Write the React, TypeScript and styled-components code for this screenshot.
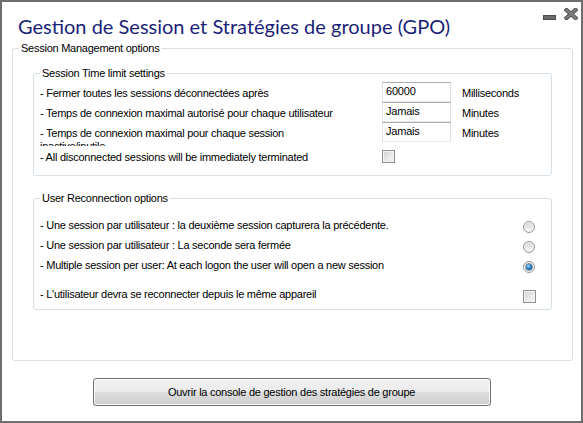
import React from 'react';
import styled, { createGlobalStyle } from 'styled-components';

const GlobalStyle = createGlobalStyle`
    html, body {
        margin: 0;
        padding: 0;
        background: #fff;
    }
    body {
        font-family: "Liberation Sans", Arial, sans-serif;
        font-size: 11px;
        color: #000;
    }
    * {
        box-sizing: border-box;
    }
`;

const Window = styled.div`
    width: 583px;
    height: 423px;
    border: 2px solid #6e6e6e;
    background: #fff;
    display: flex;
    flex-direction: column;
`;

const TitleBar = styled.div`
    height: 39px;
    display: flex;
    align-items: flex-start;
    justify-content: space-between;
    padding: 13px 3px 0 16px;
`;

const Title = styled.h1`
    margin: 0;
    font-family: Lato, "Open Sans", sans-serif;
    font-weight: 400;
    font-size: 20px;
    line-height: 23px;
    color: #1a1f78;
`;

const Controls = styled.div`
    display: flex;
    align-items: flex-start;
    gap: 7px;
    margin-top: -7px;
`;

const Group = styled.fieldset<{ $pad: string; $margin?: string }>`
    margin: ${p => p.$margin || '0'};
    padding: ${p => p.$pad};
    border: 1px solid #d5dfe5;
    border-radius: 3px;
    min-inline-size: 0;
`;

// legend sits from the padding edge, so the offset is given per group
const Legend = styled.legend<{ $offset: number }>`
    margin-left: ${p => p.$offset}px;
    padding: 0 2px;
    line-height: 14px;
    letter-spacing: -0.25px;
`;

const TimeRow = styled.div`
    display: grid;
    grid-template-columns: 331px 69px 1fr;
    grid-template-rows: 20px;
    column-gap: 11px;
    align-items: center;
`;

const RowText = styled.span<{ $clip?: boolean }>`
    letter-spacing: -0.25px;
    white-space: ${p => p.$clip ? 'normal' : 'nowrap'};
    line-height: ${p => p.$clip ? '13px' : '20px'};
    padding-top: ${p => p.$clip ? '5px' : '1px'};
    height: ${p => p.$clip ? '24px' : '20px'};
    max-width: ${p => p.$clip ? '275px' : 'none'};
    overflow: hidden;
    align-self: start;
`;

const TextBox = styled.input`
    width: 69px;
    height: 20px;
    margin: 0;
    padding: 0 0 3px 3px;
    border: 1px solid;
    border-color: #abadb3 #dbdfe6 #e3e9ef #e2e3ea;
    font-family: "Liberation Sans", Arial, sans-serif;
    font-size: 11px;
    letter-spacing: -0.2px;
    color: #000;
    background: #fff;
    outline: none;
`;

const Unit = styled.span`
    letter-spacing: -0.25px;
    padding-top: 2px;
`;

const CheckRow = styled(TimeRow)`
    margin-top: 4px;
`;

const Check = styled.span`
    display: block;
    width: 13px;
    height: 13px;
    border: 1px solid #8e8f8f;
    background: linear-gradient(135deg, #cfcfcf 0%, #eaeaea 60%, #f7f7f7 100%);
    box-shadow: inset 0 0 0 1px #f4f4f4;
`;

const OptionRow = styled.div<{ $gap?: number }>`
    display: flex;
    align-items: center;
    height: 20px;
    margin-top: ${p => p.$gap || 0}px;
`;

const OptionText = styled.span`
    flex: 1;
    letter-spacing: -0.25px;
    white-space: nowrap;
`;

const ControlSlot = styled.span`
    width: 14px;
    margin-right: 15px;
    margin-top: 4px;
    display: flex;
    justify-content: center;
`;

const Radio = styled.span<{ $checked?: boolean }>`
    position: relative;
    display: block;
    width: 12px;
    height: 12px;
    border-radius: 50%;
    border: 1px solid #9a9a9a;
    background: linear-gradient(#d8d8d8, #f8f8f8);
    box-shadow: inset 0 0 0 1px #f0f0f0;
    &::after {
        content: '';
        display: ${p => p.$checked ? 'block' : 'none'};
        position: absolute;
        left: 2px;
        top: 2px;
        width: 6px;
        height: 6px;
        border-radius: 50%;
        background: radial-gradient(circle at 40% 35%, #a8dcff 0%, #2a7fc4 45%, #0c3f73 100%);
        box-shadow: 0 0 0 0.5px #1c3e60;
    }
`;

const Footer = styled.div`
    display: flex;
    justify-content: center;
    margin-top: 17px;
`;

const Button = styled.button`
    width: 398px;
    height: 28px;
    padding: 0;
    border: 1px solid #707070;
    border-radius: 3px;
    background: linear-gradient(#f2f2f2 0%, #ebebeb 50%, #dddddd 50%, #cfcfcf 100%);
    box-shadow: inset 0 0 0 1px #fbfbfb;
    font-family: "Liberation Sans", Arial, sans-serif;
    font-size: 11px;
    letter-spacing: -0.25px;
    color: #000;
`;

const Minimize = () => (
    <svg width="14" height="12" viewBox="0 0 14 12">
        <rect x="0.5" y="7.5" width="12" height="4" fill="#6c6c6c" stroke="#4a4a4a" />
    </svg>
);

const Close = () => (
    <svg width="14" height="12" viewBox="0 0 14 12">
        <path d="M2.5 2 L11.5 10 M11.5 2 L2.5 10" stroke="#4a4a4a" strokeWidth="4.2" strokeLinecap="square" />
        <path d="M2.5 2 L11.5 10 M11.5 2 L2.5 10" stroke="#7c7c7c" strokeWidth="2.4" strokeLinecap="square" />
    </svg>
);

const timeRows = [
    { label: '- Fermer toutes les sessions déconnectées après', value: '60000', unit: 'Milliseconds' },
    { label: '- Temps de connexion maximal autorisé pour chaque utilisateur', value: 'Jamais', unit: 'Minutes' },
    { label: '- Temps de connexion maximal pour chaque session inactive/inutile', value: 'Jamais', unit: 'Minutes', clip: true },
];

const options = [
    { label: '- Une session par utilisateur : la deuxième session capturera la précédente.' },
    { label: '- Une session par utilisateur : La seconde sera fermée' },
    { label: '- Multiple session per user: At each logon the user will open a new session', checked: true },
];

export default function App() {
    return (
        <>
            <GlobalStyle />
            <Window>
                <TitleBar>
                    <Title>Gestion de Session et Stratégies de groupe (GPO)</Title>
                    <Controls>
                        <Minimize />
                        <Close />
                    </Controls>
                </TitleBar>

                <Group $pad="11px 20px 50px 20px" $margin="0 8px 0 10px">
                    <Legend $offset={-14}>Session Management options</Legend>

                    <Group $pad="2px 0 9px 6px">
                        <Legend $offset={0}>Session Time limit settings</Legend>
                        {timeRows.map(r => (
                            <TimeRow key={r.label}>
                                <RowText $clip={r.clip}>{r.label}</RowText>
                                <TextBox value={r.value} readOnly />
                                <Unit>{r.unit}</Unit>
                            </TimeRow>
                        ))}
                        <CheckRow>
                            <RowText>- All disconnected sessions will be immediately terminated</RowText>
                            <Check />
                        </CheckRow>
                    </Group>

                    <Group $pad="10px 0 5px 6px" $margin="15px 0 0 0">
                        <Legend $offset={0}>User Reconnection options</Legend>
                        {options.map(o => (
                            <OptionRow key={o.label}>
                                <OptionText>{o.label}</OptionText>
                                <ControlSlot><Radio $checked={o.checked} /></ControlSlot>
                            </OptionRow>
                        ))}
                        <OptionRow $gap={9}>
                            <OptionText>- L'utilisateur devra se reconnecter depuis le même appareil</OptionText>
                            <ControlSlot><Check /></ControlSlot>
                        </OptionRow>
                    </Group>
                </Group>

                <Footer>
                    <Button type="button">Ouvrir la console de gestion des stratégies de groupe</Button>
                </Footer>
            </Window>
        </>
    );
}
